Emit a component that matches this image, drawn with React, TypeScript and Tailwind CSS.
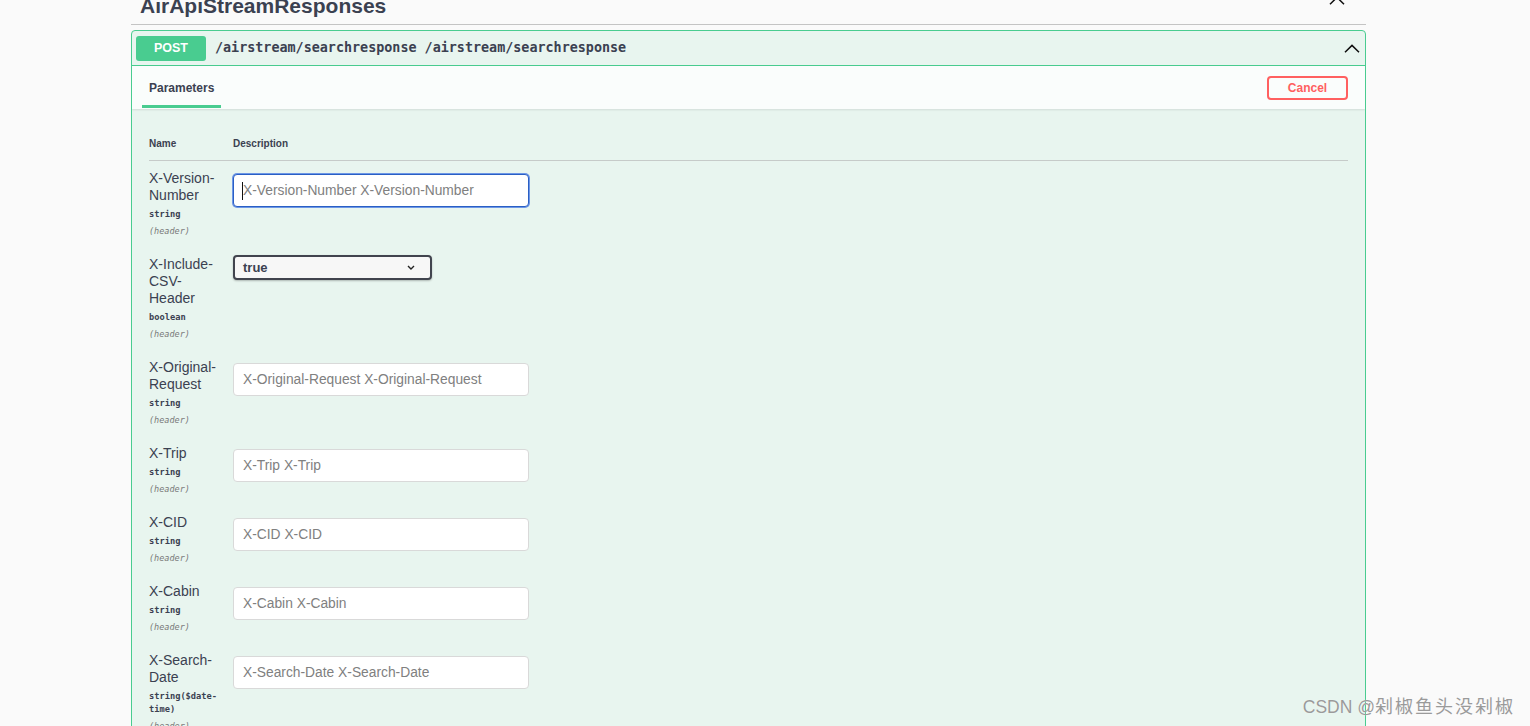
import React from 'react';

type Param = {
  name: string;
  type: string;
  kind?: 'input' | 'select';
  focused?: boolean;
};

const params: Param[] = [
  { name: 'X-Version-Number', type: 'string', focused: true },
  { name: 'X-Include-CSV-Header', type: 'boolean', kind: 'select' },
  { name: 'X-Original-Request', type: 'string' },
  { name: 'X-Trip', type: 'string' },
  { name: 'X-CID', type: 'string' },
  { name: 'X-Cabin', type: 'string' },
  { name: 'X-Search-Date', type: 'string($date-time)' },
];

const sans = "font-['Liberation_Sans',Arial,sans-serif]";
const mono = "font-['DejaVu_Sans_Mono',monospace]";

function Chevron({ className }: { className?: string }) {
  return (
    <svg width="16" height="9" viewBox="0 0 16 9" className={className}>
      <polyline points="1,8.2 8,1.4 15,8.2" fill="none" stroke="#111" strokeWidth="1.5" />
    </svg>
  );
}

function ParamRow({ p }: { p: Param }) {
  return (
    <div className="flex py-[8px]">
      <div className="w-[84px] shrink-0 pr-[12px]">
        <div className="text-[14px] leading-[17px] text-[#3b4151]">{p.name}</div>
        <div className={`${mono} mt-[4px] text-[8.7px] leading-[13px] font-semibold text-[#3b4151]`}>
          {p.type}
        </div>
        <div className={`${mono} mt-[2px] text-[8.5px] leading-[17px] italic text-[#7a7a7a]`}>
          (header)
        </div>
      </div>
      <div className="flex-1">
        {p.kind === 'select' ? (
          <div className="-mt-[1px] flex h-[25px] w-[199px] items-center justify-between rounded-[4px] border-2 border-[#41444e] bg-[#f7f7f7] pl-[8px] pr-[15px] shadow-[0_1px_2px_rgba(0,0,0,0.25)]">
            <span className="text-[13px] font-bold text-[#3b4151]">true</span>
            <svg width="8" height="5" viewBox="0 0 8 5">
              <polyline points="1,1 4,4 7,1" fill="none" stroke="#222" strokeWidth="1.4" />
            </svg>
          </div>
        ) : (
          <div className="relative mt-[4px] w-[296px]">
            <input
              readOnly
              placeholder={`${p.name} ${p.name}`}
              className={`h-[33px] w-full rounded-[4px] border bg-white px-[9px] text-[13.8px] text-[#3b4151] outline-none placeholder:text-[#808080] ${sans} ${
                p.focused ? 'border-[#2a5fc4] ring-1 ring-[#6d97e6]' : 'border-[#d9d9d9]'
              }`}
            />
            {p.focused && (
              <span className="absolute left-[9px] top-[8px] h-[18px] w-px bg-[#111]" />
            )}
          </div>
        )}
      </div>
    </div>
  );
}

export default function App() {
  return (
    <div className={`relative h-[726px] overflow-hidden bg-[#fafafa] ${sans}`}>
      <div className="ml-[131px] w-[1235px]">
        {/* section header, scrolled partly out of view */}
        <div className="-mt-[5px] flex items-end justify-between border-b border-[#c4c4c4] pb-[8px] pl-[9px]">
          <h3 className="text-[21px] leading-[21px] font-bold text-[#3b4151]">AirApiStreamResponses</h3>
          <Chevron className="mr-[21px] self-start mt-[1px]" />
        </div>

        <div className="mt-[5px] overflow-hidden rounded-[4px] border border-[#49cc90] bg-[#e8f5ef]">
          <div className="flex h-[35px] items-center border-b border-[#49cc90] px-[4px]">
            <span className="flex h-[25px] w-[70px] items-center justify-center rounded-[3px] bg-[#49cc90] text-[12.5px] font-bold text-white">
              POST
            </span>
            <span className={`${mono} ml-[9px] flex-1 text-[13.4px] font-semibold text-[#3b4151]`}>
              /airstream/searchresponse /airstream/searchresponse
            </span>
            <Chevron className="mr-[1px]" />
          </div>

          <div className="flex h-[43px] items-center justify-between bg-white/80 pl-[10px] pr-[17px] shadow-[0_1px_2px_rgba(0,0,0,0.1)]">
            <div className="relative flex h-full items-center px-[7px]">
              <span className="text-[12px] font-bold text-[#3b4151]">Parameters</span>
              <span className="absolute bottom-[1px] left-0 right-0 h-[3px] bg-[#49cc90]" />
            </div>
            <button className="h-[24px] w-[81px] rounded-[4px] border-2 border-[#ff6060] bg-transparent text-[12px] font-bold text-[#ff6060]">
              Cancel
            </button>
          </div>

          <div className="px-[17px] pt-[29px] pb-[20px]">
            <div className="flex border-b border-[#c6cbc9] pb-[10px] text-[10px] leading-[12px] font-bold text-[#3b4151]">
              <span className="w-[84px]">Name</span>
              <span>Description</span>
            </div>
            <div className="pt-[1px]">
              {params.map((p) => (
                <ParamRow key={p.name} p={p} />
              ))}
            </div>
          </div>
        </div>
      </div>

      <div className="absolute bottom-[6px] right-[15px] flex items-baseline text-[#9a9a9a] [text-shadow:0_0_1px_rgba(255,255,255,0.8)]">
        <span className="text-[17.5px]">CSDN @</span>
        <span className="font-['Noto_Sans_CJK_SC',sans-serif] text-[18px] tracking-[2px]">剁椒鱼头没剁椒</span>
      </div>
    </div>
  );
}
